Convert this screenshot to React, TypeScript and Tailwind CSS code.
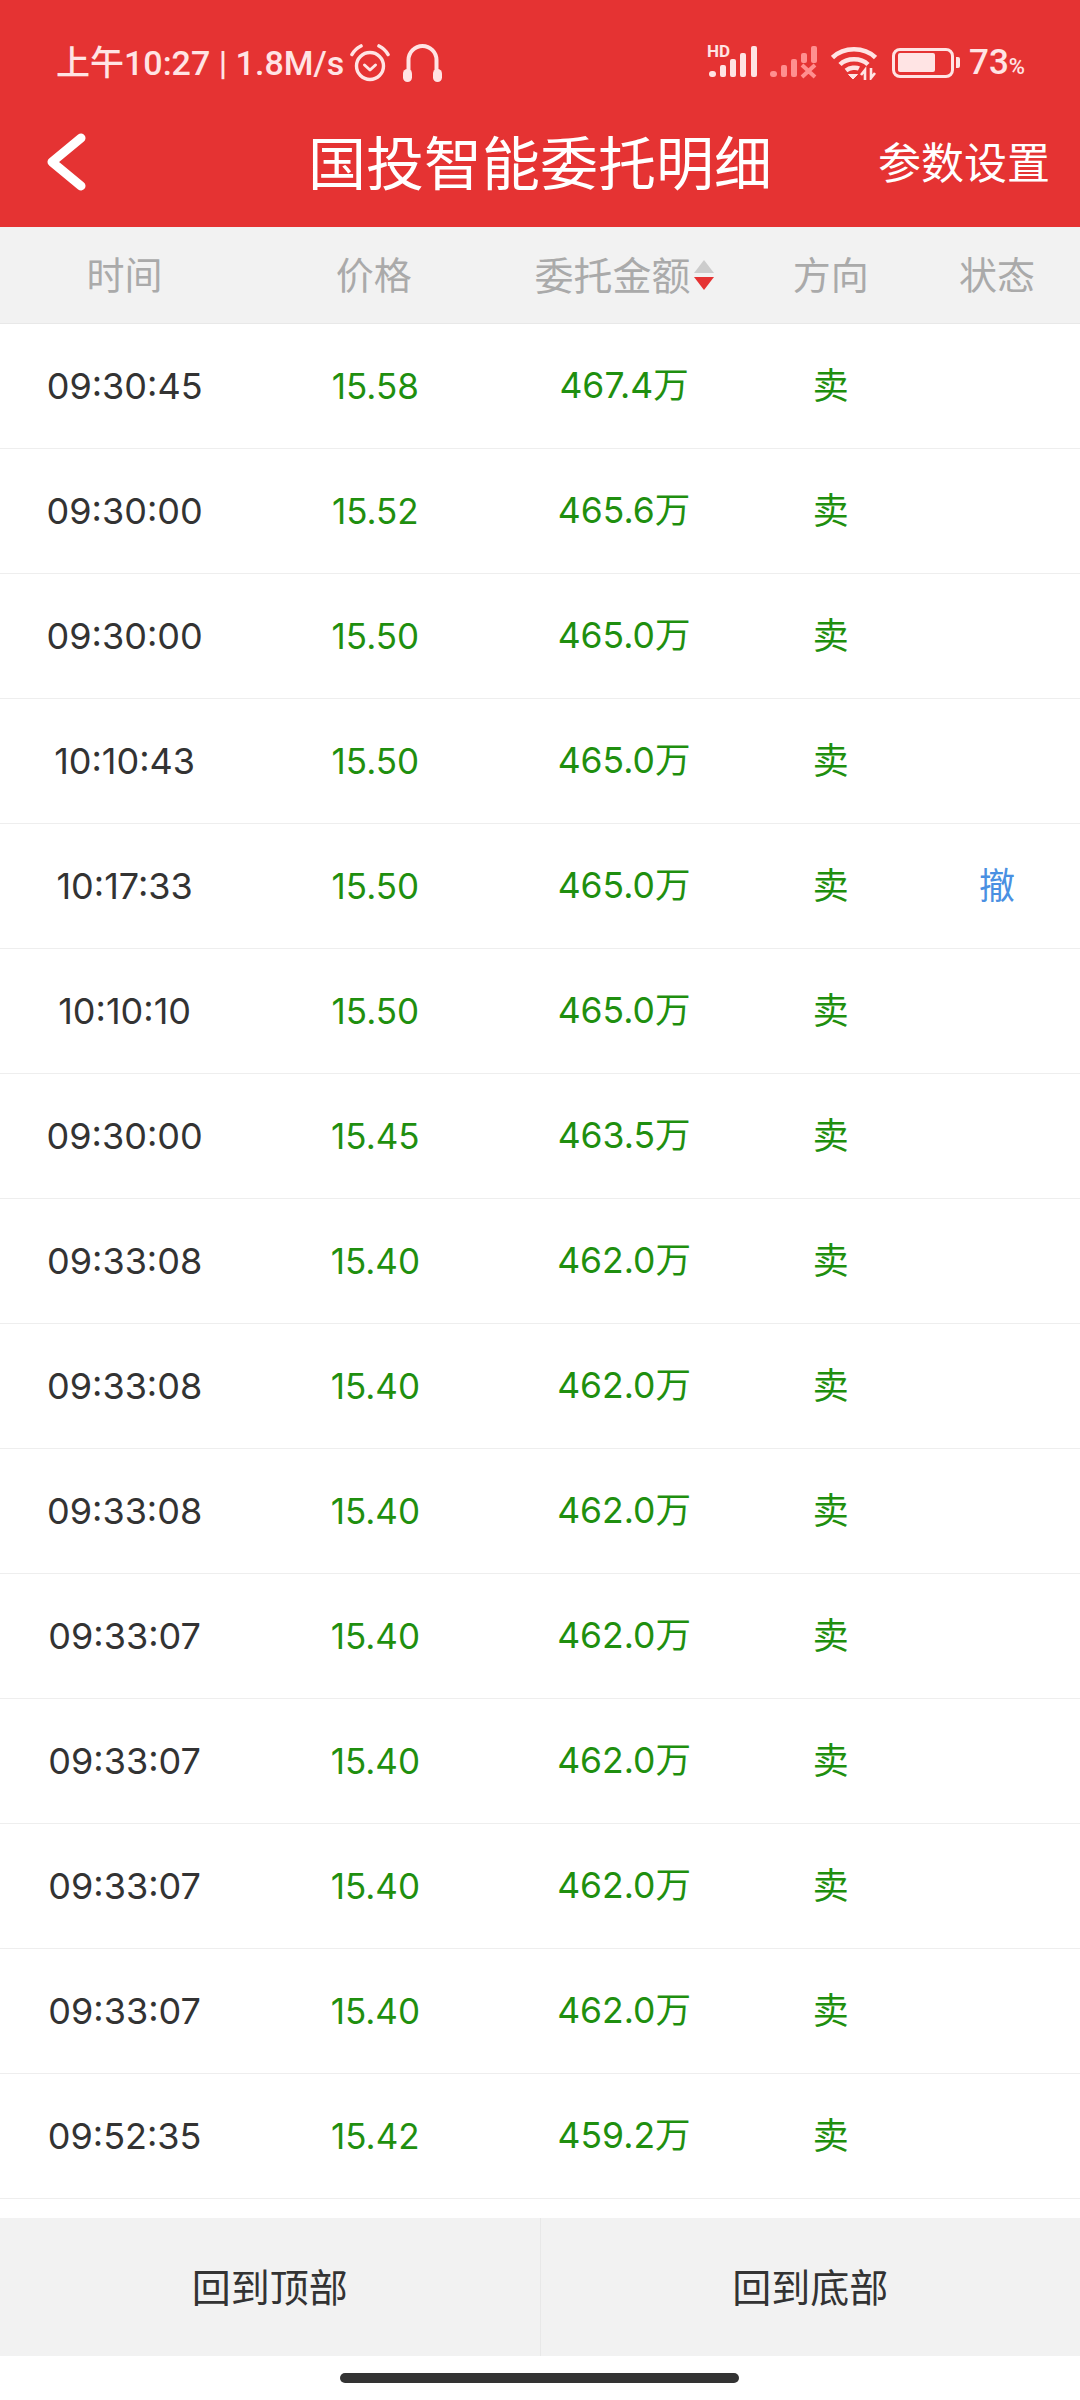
const FONT = "font-['Inter','Noto_Sans_CJK_SC',sans-serif]";

type Row = { time: string; price: string; amount: string; status?: string };

const rows: Row[] = [
  { time: '09:30:45', price: '15.58', amount: '467.4万' },
  { time: '09:30:00', price: '15.52', amount: '465.6万' },
  { time: '09:30:00', price: '15.50', amount: '465.0万' },
  { time: '10:10:43', price: '15.50', amount: '465.0万' },
  { time: '10:17:33', price: '15.50', amount: '465.0万', status: '撤' },
  { time: '10:10:10', price: '15.50', amount: '465.0万' },
  { time: '09:30:00', price: '15.45', amount: '463.5万' },
  { time: '09:33:08', price: '15.40', amount: '462.0万' },
  { time: '09:33:08', price: '15.40', amount: '462.0万' },
  { time: '09:33:08', price: '15.40', amount: '462.0万' },
  { time: '09:33:07', price: '15.40', amount: '462.0万' },
  { time: '09:33:07', price: '15.40', amount: '462.0万' },
  { time: '09:33:07', price: '15.40', amount: '462.0万' },
  { time: '09:33:07', price: '15.40', amount: '462.0万' },
  { time: '09:52:35', price: '15.42', amount: '459.2万' },
];

const AlarmIcon = () => (
  <svg width="40" height="38" viewBox="0 0 40 38" fill="none" stroke="#ffe4e4" strokeLinecap="round">
    <circle cx="20" cy="22" r="13.5" strokeWidth="3.4" />
    <path d="M14.5 21l5.5 5 5.5-5" strokeWidth="3" strokeLinejoin="round" />
    <path d="M2 10.5Q5 5 11 2M38 10.5Q35 5 29 2" strokeWidth="3.6" />
  </svg>
);

const HeadphoneIcon = () => (
  <svg width="39" height="38" viewBox="0 0 39 38" fill="none">
    <path d="M5.5 30V16a14 14 0 0 1 28 0v14" stroke="#ffe4e4" strokeWidth="4" />
    <rect x="0" y="25" width="9" height="13" rx="4.5" fill="#ffe4e4" />
    <rect x="30" y="25" width="9" height="13" rx="4.5" fill="#ffe4e4" />
  </svg>
);

const SignalHd = () => (
  <div className="relative w-[50px] h-[34px]">
    <span className="absolute left-0 top-[-2px] text-[17px] leading-[14px] font-bold text-[#ffe4e4] font-['Roboto',sans-serif]">HD</span>
    <svg className="absolute inset-0" width="50" height="34" viewBox="0 0 50 34" fill="#ffe4e4">
      <rect x="2" y="25" width="7" height="6" rx="3" />
      <rect x="13" y="19" width="6" height="12" rx="2" />
      <rect x="23" y="13" width="6" height="18" rx="2" />
      <rect x="33" y="7" width="6" height="24" rx="2" />
      <rect x="44" y="0" width="6" height="31" rx="2" />
    </svg>
  </div>
);

const SignalOff = () => (
  <svg width="48" height="34" viewBox="0 0 48 34" fill="#ff8f8f">
    <rect x="0" y="25" width="7" height="6" rx="3" />
    <rect x="11" y="19" width="6" height="12" rx="2" />
    <rect x="21" y="13" width="6" height="18" rx="2" />
    <rect x="31" y="7" width="6" height="10" rx="2" />
    <rect x="41" y="0" width="6" height="17" rx="2" />
    <path d="M32 19l13 12M45 19L32 31" stroke="#ff8f8f" strokeWidth="4" />
  </svg>
);

const WifiIcon = () => (
  <svg width="46" height="34" viewBox="0 0 46 34" fill="none" stroke="#ffe4e4" strokeWidth="4.5">
    <path d="M1.5 11.5C13 0.5 33 0.5 44.5 11.5" />
    <path d="M9 18.5C16 11.5 30 11.5 37 18.5" />
    <path d="M15 24.5C19 21.5 25 21 28 22.5" />
    <path d="M17.5 28.5L22 33l4.5-4.5z" fill="#ffe4e4" strokeWidth="1" />
    <path d="M34 34V24l-4 5M40 22v10l4-5" strokeWidth="2.6" />
  </svg>
);

const BatteryIcon = () => (
  <div className="flex items-center gap-[2px]">
    <div className="w-[62px] h-[30px] rounded-[8px] border-[3.5px] border-[#ffe4e4] p-[2.5px]">
      <div className="w-[37px] h-full rounded-[2px] bg-[#ffe4e4]" />
    </div>
    <div className="w-[4px] h-[11px] rounded-r-[2px] bg-[#ffe4e4]" />
  </div>
);

const StatusBar = () => (
  <div className="flex items-center justify-between h-[99px] pt-[26px] pl-[56px] pr-[55px] text-[#ffe4e4]">
    <div className="flex items-center">
      <span className="text-[34px] leading-none font-medium font-['Roboto','Noto_Sans_CJK_SC',sans-serif] whitespace-nowrap">上午10:27 | 1.8M/s</span>
      <span className="ml-[6px]"><AlarmIcon /></span>
      <span className="ml-[13px]"><HeadphoneIcon /></span>
    </div>
    <div className="flex items-center">
      <SignalHd />
      <span className="ml-[13px]"><SignalOff /></span>
      <span className="ml-[13px]"><WifiIcon /></span>
      <span className="ml-[15px]"><BatteryIcon /></span>
      <span className="ml-[9px] text-[35px] leading-none font-medium font-['Roboto',sans-serif] whitespace-nowrap">
        73<span className="text-[22px]">%</span>
      </span>
    </div>
  </div>
);

const NavBar = () => (
  <div className="relative flex items-center justify-center h-[128px] text-white">
    <svg className="absolute left-[46px] top-[34px]" width="40" height="58" viewBox="0 0 40 58" fill="none" stroke="#fff" strokeWidth="9" strokeLinecap="round" strokeLinejoin="round">
      <path d="M35 5L6 29l29 24" />
    </svg>
    <span className="text-[58px] leading-none pt-[2px]">国投智能委托明细</span>
    <span className="absolute right-[30px] top-[43px] text-[43px] leading-none">参数设置</span>
  </div>
);

const GRID = 'grid grid-cols-[1.5fr_1.5fr_1.5fr_1fr_1fr] items-center text-center';

const TableHead = () => (
  <div className={`${GRID} h-[97px] bg-[#f2f2f2] border-b border-[#e8e8e8] text-[38px] leading-none text-[#aaaaaa]`}>
    <span>时间</span>
    <span>价格</span>
    <span className="flex items-center justify-center pl-[2px]">
      <span className="text-[39px]">委托金额</span>
      <span className="ml-[3px] flex flex-col gap-[4px]">
        <span className="w-0 h-0 border-x-[10px] border-x-transparent border-b-[13px] border-b-[#cccccc]" />
        <span className="w-0 h-0 border-x-[10px] border-x-transparent border-t-[13px] border-t-[#e53333]" />
      </span>
    </span>
    <span>方向</span>
    <span>状态</span>
  </div>
);

const TableRow = ({ time, price, amount, status }: Row) => (
  <div className={`${GRID} h-[125px] border-b border-[#eeeeee] text-[36px] leading-none`}>
    <span className="text-[#333333]">{time}</span>
    <span className="text-[35px] pl-[3px] text-[#1f8f0f]">{price}</span>
    <span className="text-[35.5px] pl-[2px] text-[#1f8f0f]">{amount}</span>
    <span className="text-[#1f8f0f]">卖</span>
    <span className="text-[#4a90e2]">{status}</span>
  </div>
);

export default function App() {
  return (
    <div className={`w-[1080px] h-[2400px] bg-white overflow-hidden ${FONT}`}>
      <div className="bg-[#e53333]">
        <StatusBar />
        <NavBar />
      </div>
      <TableHead />
      {rows.map((r, i) => (
        <TableRow key={i} {...r} />
      ))}
      <div className="mt-[19px] flex h-[138px] bg-[#f2f2f2] text-[39px] text-[#333333]">
        <div className="flex-1 flex items-center justify-center pt-[2px] border-r border-[#e8e8e8]">回到顶部</div>
        <div className="flex-1 flex items-center justify-center pt-[2px]">回到底部</div>
      </div>
      <div className="mt-[17px] ml-[340px] w-[399px] h-[10px] rounded-full bg-[#333333]" />
    </div>
  );
}
